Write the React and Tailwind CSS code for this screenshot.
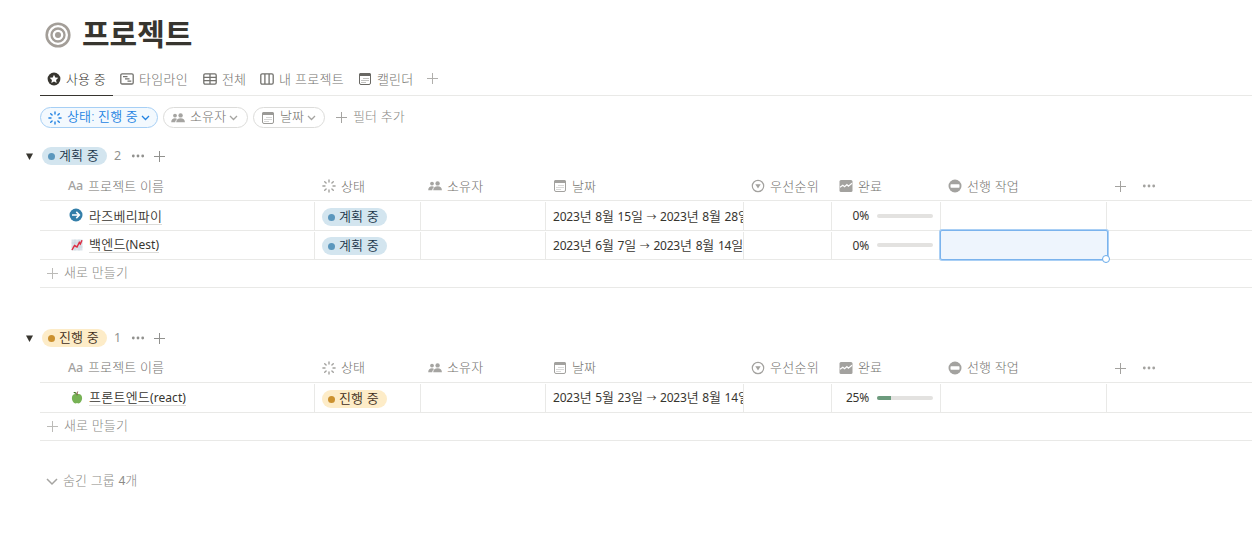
import React from "react";

const Burst = ({ className = "" }) => (
  <svg width="14" height="14" viewBox="0 0 14 14" className={"shrink-0 " + className} stroke="currentColor" strokeWidth="1.4" strokeLinecap="round">
    <path d="M7 .9v2.100M7 11v2.100M.9 7h2.100M11 7h2.100M2.700 2.700l1.400 1.400M9.900 9.900l1.400 1.400M2.700 11.300l1.400-1.400M9.900 4.100l1.400-1.400" />
  </svg>
);

const People = () => (
  <svg width="14" height="14" viewBox="0 0 14 14" className="shrink-0 text-[#a5a4a1]" fill="currentColor">
    <circle cx="4" cy="4.600" r="1.900" />
    <circle cx="9.600" cy="4.400" r="2.200" />
    <path d="M.2 11.200c0-2.400 1.600-3.900 3.800-3.900.8 0 1.500.2 2.100.6-1.200.9-1.800 2-1.800 3.300z" />
    <path d="M5.200 11.200c0-2.500 1.800-4 4.400-4s4.300 1.500 4.300 4z" />
  </svg>
);

const Calendar = ({ className = "" }) => (
  <svg width="14" height="14" viewBox="0 0 14 14" className={"shrink-0 " + className}>
    <rect x="1.500" y="1.500" width="11" height="11" rx="1.500" fill="none" stroke="currentColor" />
    <path d="M1 2.500a1.500 1.500 0 0 1 1.500-1.500h9A1.500 1.500 0 0 1 13 2.500V4H1z" fill="currentColor" />
    <path d="M5 6.500h6M3 8.500h8M3 10.500h5" stroke="currentColor" strokeWidth="1" opacity=".4" />
  </svg>
);

const Timeline = () => (
  <svg width="14" height="14" viewBox="0 0 14 14" className="shrink-0" fill="none" stroke="currentColor">
    <rect x=".8" y="1.800" width="12.400" height="10.200" rx="1.300" strokeWidth="1.300" />
    <path d="M3 4.700h4.500M5 6.900h4.500M7.500 9.100h3.800" strokeWidth="1.300" />
  </svg>
);

const Table = () => (
  <svg width="14" height="14" viewBox="0 0 14 14" className="shrink-0" fill="none" stroke="currentColor" strokeWidth="1.300">
    <rect x=".8" y="1.900" width="12.400" height="10.200" rx="1.300" />
    <path d="M.8 5.300h12.400M.8 8.700h12.400M7 2v10" />
  </svg>
);

const Board = () => (
  <svg width="14" height="14" viewBox="0 0 14 14" className="shrink-0" fill="none" stroke="currentColor" strokeWidth="1.300">
    <rect x=".8" y="1.900" width="12.400" height="10.200" rx="1.300" />
    <path d="M4.900 2v10M9.100 2v10" />
  </svg>
);

const StarBadge = () => (
  <svg width="14" height="14" viewBox="0 0 14 14" className="shrink-0">
    <circle cx="7" cy="7" r="6.400" fill="#37352f" />
    <path d="M7 2.700l1.250 2.800 3.050.35-2.250 2.050.6 3L7 9.400 4.350 10.900l.6-3L2.700 5.850l3.050-.35z" fill="#fff" />
  </svg>
);

const Priority = () => (
  <svg width="14" height="14" viewBox="0 0 14 14" className="shrink-0">
    <circle cx="7" cy="7" r="5.700" fill="none" stroke="currentColor" strokeWidth="1.200" />
    <path d="M4.300 5.300h5.400L7 9.600z" fill="currentColor" />
  </svg>
);

const Progress = () => (
  <svg width="14" height="14" viewBox="0 0 14 14" className="shrink-0">
    <rect x=".5" y="1" width="13" height="12" rx="1.500" fill="currentColor" />
    <path d="M1 8.300l2.800-2 1.800 1.500 2.300-2.200 1.500 1.600L13 4.300" fill="none" stroke="#fff" strokeWidth="1.200" />
  </svg>
);

const Blocked = () => (
  <svg width="14" height="14" viewBox="0 0 14 14" className="shrink-0">
    <circle cx="7" cy="7" r="6.500" fill="currentColor" />
    <rect x="2.500" y="5.300" width="9" height="3.400" rx=".6" fill="#fff" />
  </svg>
);

const Plus = ({ className = "" }) => (
  <svg width="11" height="11" viewBox="0 0 11 11" className={"shrink-0 " + className} stroke="currentColor">
    <path d="M5.500 0v11M0 5.500h11" />
  </svg>
);

const Dots = ({ className = "" }) => (
  <svg width="14" height="4" viewBox="0 0 14 4" className={"shrink-0 " + className} fill="currentColor">
    <circle cx="2.300" cy="2" r="1.400" />
    <circle cx="7" cy="2" r="1.400" />
    <circle cx="11.700" cy="2" r="1.400" />
  </svg>
);

const Chevron = ({ className = "text-[#a5a4a1]" }) => (
  <svg width="9" height="6" viewBox="0 0 9 6" className={"-ml-[2px] shrink-0 " + className} fill="none" stroke="currentColor" strokeWidth="1.300">
    <path d="M1 1l3.500 3.500L8 1" />
  </svg>
);

const ArrowBadge = () => (
  <svg width="14" height="14" viewBox="0 0 14 14" className="-ml-px -mt-px shrink-0">
    <circle cx="7" cy="7" r="6.500" fill="#337ea9" />
    <path d="M3 7h7.200M7.300 3.900L10.400 7 7.300 10.100" fill="none" stroke="#fff" strokeWidth="1.500" />
  </svg>
);

const ChartUp = () => (
  <svg width="12" height="12" viewBox="0 0 12 12" className="shrink-0">
    <rect x=".5" y=".5" width="11" height="11" fill="#dbe3ea" />
    <path d="M.5 4h11M.5 8h11M4 .5v11M8 .5v11" stroke="#c3d0da" strokeWidth=".6" />
    <path d="M1 11l2.500-4.500L6 8l2.300-4.500 1 1.500L11 1.200" fill="none" stroke="#dd2e44" strokeWidth="1.500" />
  </svg>
);

const Apple = () => (
  <svg width="12" height="13" viewBox="0 0 12 13" className="shrink-0">
    <path d="M6 3.600C4 2.400.9 3.400.9 7c0 3 2 5.400 3.600 5.400.7 0 1-.3 1.500-.3s.8.3 1.500.3c1.600 0 3.600-2.400 3.600-5.400 0-3.600-3.100-4.600-5.100-3.400z" fill="#77b255" />
    <path d="M6 4.200C6 2.500 6.200 1.500 6.700.6" stroke="#662113" strokeWidth=".9" fill="none" />
    <path d="M5.800 2.700C4.600 2.900 3 2.500 2.300 1 4 .7 5.400 1.200 5.800 2.700z" fill="#3e721d" />
  </svg>
);

const Caret = () => (
  <svg width="7" height="7" viewBox="0 0 7 7" className="shrink-0" fill="#37352f">
    <path d="M0 .5h7L3.500 7z" />
  </svg>
);

// Latin letters and digits are set slightly tighter than Hangul.
function Mixed({ text }) {
  return text.split(/([0-9A-Za-z()]+|→)/).map((part, i) => {
    if (part === "→") return <span key={i} className="inline-block w-[10px] text-[10px] leading-none tracking-normal">→</span>;
    if (i % 2) return <span key={i} className={"text-[12px] font-normal " + (/[a-z]/.test(part) ? "tracking-[0.05px]" : "tracking-[-0.21px]")}>{part}</span>;
    return part;
  });
}

const Label = ({ children, className = "", offset = "mt-px" }) => (
  <span className={offset + " whitespace-nowrap leading-[17px] " + className}><Mixed text={children} /></span>
);

function Status({ planned }) {
  return (
    <span className={"flex h-[18px] w-[65px] shrink-0 items-center gap-1 rounded-full pl-1.5 " + (planned ? "bg-[#d3e5ef] text-[#183347]" : "bg-[#fdecc8] text-[#402c1b]")}>
      <span className={"mt-px size-[7px] shrink-0 rounded-full " + (planned ? "bg-[#5b97bd]" : "bg-[#cb912f]")} />
      <Label offset="-mt-px" className="font-[350]">{planned ? "계획 중" : "진행 중"}</Label>
    </span>
  );
}

function GroupHead({ planned, count }) {
  return (
    <div className="flex h-[33px] items-center pl-[26px] pt-px text-[#91918e]">
      <Caret />
      <span className="ml-[9px]"><Status planned={planned} /></span>
      <span className="ml-[7px] w-[17px] text-[12.5px] font-normal leading-4">{count}</span>
      <Dots />
      <Plus className="ml-[9px]" />
    </div>
  );
}

const COLS = "grid grid-cols-[275px_106px_125px_198px_88px_109px_166px_1fr]";
const HEAD = "flex items-center gap-[5px] pl-[7px]";
const HEAD_TEXT = "text-[#73726e]";

function TableHead({ offset }) {
  return (
    <div className={COLS + " h-[29px] border-b border-[#e9e9e7] text-[#a3a29f]"}>
      <div className="flex items-center gap-[5px] pl-[28px]">
        <span className="text-[12.5px] font-medium leading-4 tracking-[-0.2px]">Aa</span>
        <Label offset={offset} className={HEAD_TEXT}>프로젝트 이름</Label>
      </div>
      <div className={HEAD}><Burst /><Label offset={offset} className={HEAD_TEXT}>상태</Label></div>
      <div className={HEAD}><People /><Label offset={offset} className={HEAD_TEXT}>소유자</Label></div>
      <div className={HEAD}><Calendar /><Label offset={offset} className={HEAD_TEXT}>날짜</Label></div>
      <div className={HEAD + " tracking-[0.3px]"}><Priority /><Label offset={offset} className={HEAD_TEXT}>우선순위</Label></div>
      <div className={HEAD}><Progress /><Label offset={offset} className={HEAD_TEXT}>완료</Label></div>
      <div className={HEAD}><Blocked /><Label offset={offset} className={HEAD_TEXT}>선행 작업</Label></div>
      <div className="flex items-center gap-4 pl-2"><Plus /><Dots /></div>
    </div>
  );
}

const CELL = "mt-px flex items-center border-l border-[#e9e9e7]";

function Row({ icon, name, planned, date, percent, selected, short, offset = "-mt-px" }) {
  return (
    <div className={COLS + " border-b border-[#e9e9e7] text-[#37352f] " + (short ? "h-[29px]" : "h-[30px]")}>
      <div className="flex items-center pl-[29px]">
        <span className="flex w-[15px] justify-center">{icon}</span>
        <span className={"ml-[5px] h-[17px] whitespace-nowrap border-b border-[#dcdcda] font-[350] leading-4 tracking-[0.25px] " + offset}><Mixed text={name} /></span>
      </div>
      <div className={CELL + " -ml-px pl-[7px] pt-px"}><Status planned={planned} /></div>
      <div className={CELL + " -ml-px"} />
      <div className={CELL + " -ml-px overflow-hidden pl-[7px]"}><Label offset={offset} className="font-[350]">{date}</Label></div>
      <div className={CELL + " -ml-px"} />
      <div className={CELL + " -ml-px pr-[7px]"}>
        <span className="w-[37px] text-right text-[12px] font-normal leading-4 tracking-[-0.2px]">{percent}%</span>
        <span className="-mt-px ml-2 h-1 w-14 overflow-hidden rounded-full bg-[#e3e2e0]">
          <span className="block h-full bg-[#6c9b7d]" style={{ width: percent + "%" }} />
        </span>
      </div>
      <div className={CELL + " relative -ml-px"}>
        {selected && (
          <div className="absolute -bottom-px -left-px -right-px -top-[2px] rounded-[2px] border border-[#7ab3ed] bg-[#eef5fd] shadow-[0_0_0_1px_#a9cff5]">
            <span className="absolute -bottom-[4px] -right-[3px] size-2 rounded-full border border-[#69abea] bg-white" />
          </div>
        )}
      </div>
      <div className={CELL + " -ml-px"} />
    </div>
  );
}

function NewRow() {
  return (
    <div className="flex h-7 items-center gap-[7px] border-b border-[#e9e9e7] pl-[7px]">
      <Plus className="text-[#bcbbb8]" />
      <Label offset="-mt-[3px]" className="-ml-px text-[#8b8a86]">새로 만들기</Label>
    </div>
  );
}

const PILL = "flex h-[21px] items-center rounded-full border gap-[5px] pl-[7px]";
const TAB = "flex h-full items-center gap-[5px]";

export default function App() {
  return (
    <div className="h-[545px] w-[1252px] overflow-hidden bg-white font-['Noto_Sans','Noto_Sans_CJK_KR',sans-serif] text-[13px] font-light tracking-[0.15px] text-[#37352f]">
      <header className="flex h-[62px] items-center gap-[11px] pl-[45px] pt-2">
        <svg width="26" height="26" viewBox="0 0 26 26" fill="none" stroke="#a39e98" className="shrink-0">
          <circle cx="13" cy="13" r="11.300" strokeWidth="2.600" />
          <circle cx="13" cy="13" r="6.500" strokeWidth="2.300" />
          <circle cx="13" cy="13" r="3" fill="#a39e98" stroke="none" />
        </svg>
        <h1 className="-mt-[2px] whitespace-nowrap text-[30px] font-bold leading-9 tracking-normal">프로젝트</h1>
      </header>

      <nav className="ml-10 flex h-[34px] border-b border-[#e9e9e7] text-[#73726e]">
        <div className="-mb-px flex h-[34px] w-[73px] items-center gap-[5px] border-b border-[#37352f] pl-[7px] text-[#37352f]"><StarBadge /><Label>사용 중</Label></div>
        <div className={TAB + " ml-[7px] w-[83px] tracking-[0.3px]"}><Timeline /><Label>타임라인</Label></div>
        <div className={TAB + " w-[57px]"}><Table /><Label>전체</Label></div>
        <div className={TAB + " w-[98px] tracking-[0.3px]"}><Board /><Label>내 프로젝트</Label></div>
        <div className={TAB + " w-[69px]"}><Calendar className="text-[#696864]" /><Label>캘린더</Label></div>
        <div className={TAB}><Plus className="text-[#b0afac]" /></div>
      </nav>

      <div className="ml-10 flex h-[43px] items-center gap-[5px] text-[#73726e]">
        <div className={PILL + " w-[118px] border-[#a6cff5] bg-[#f3f9fe] text-[#2383e2]"}><Burst /><Label offset="-mt-[2px]" className="font-[350]">상태: 진행 중</Label><Chevron className="text-[#2383e2]" /></div>
        <div className={PILL + " w-[85px] border-[#dcdcda]"}><People /><Label offset="-mt-[2px]">소유자</Label><Chevron /></div>
        <div className={PILL + " w-[72px] border-[#dcdcda]"}><Calendar className="text-[#9b9a97]" /><Label offset="-mt-[2px]">날짜</Label><Chevron /></div>
        <div className="ml-[6px] flex items-center gap-[6px] text-[#8b8a86]"><Plus className="text-[#a5a4a1]" /><Label offset="-mt-[2px]">필터 추가</Label></div>
      </div>

      <GroupHead planned count={2} />
      <section className="ml-10">
        <TableHead offset="mt-px" />
        <Row offset="mt-px" icon={<ArrowBadge />} name="라즈베리파이" planned date="2023년 8월 15일 → 2023년 8월 28일" percent={0} />
        <Row icon={<ChartUp />} name="백엔드(Nest)" planned date="2023년 6월 7일 → 2023년 8월 14일" percent={0} selected short />
        <NewRow />
      </section>

      <div className="h-[33px]" />

      <GroupHead count={1} />
      <section className="ml-10">
        <TableHead offset="-mt-px" />
        <Row icon={<Apple />} name="프론트엔드(react)" date="2023년 5월 23일 → 2023년 8월 14일" percent={25} />
        <NewRow />
      </section>

      <div className="mt-[26px] flex h-7 items-center gap-[5px] pl-[46px] pt-px text-[#8b8a86]">
        <svg width="12" height="8" viewBox="0 0 12 8" fill="none" stroke="#a5a4a1" strokeWidth="1.500"><path d="M1 1l5 5 5-5" /></svg>
        <Label offset="-mt-[3px]">숨긴 그룹 4개</Label>
      </div>
    </div>
  );
}
